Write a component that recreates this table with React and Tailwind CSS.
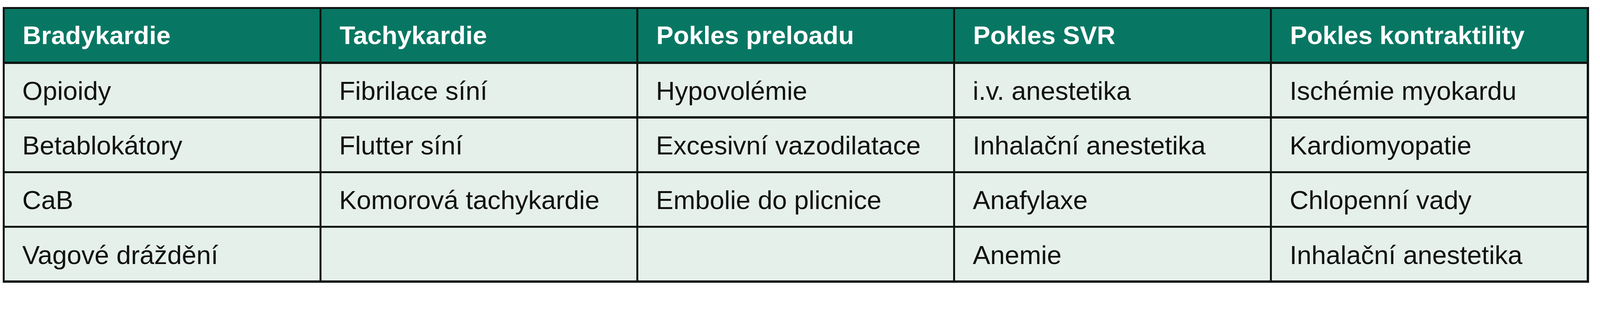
import React from 'react';

const headers = [
  'Bradykardie',
  'Tachykardie',
  'Pokles preloadu',
  'Pokles SVR',
  'Pokles kontraktility',
];

const rows = [
  ['Opioidy', 'Fibrilace síní', 'Hypovolémie', 'i.v. anestetika', 'Ischémie myokardu'],
  ['Betablokátory', 'Flutter síní', 'Excesivní vazodilatace', 'Inhalační anestetika', 'Kardiomyopatie'],
  ['CaB', 'Komorová tachykardie', 'Embolie do plicnice', 'Anafylaxe', 'Chlopenní vady'],
  ['Vagové dráždění', '', '', 'Anemie', 'Inhalační anestetika'],
];

const App = () => {
  return (
    <div className="bg-white pl-[6.5px] pt-[17.7px] font-['Liberation_Sans',Arial,sans-serif]">
      <div className="w-[4061px] bg-[#0f1612] p-[5.6px] grid grid-cols-5 auto-rows-[134.7px] gap-[5.6px]">
        {/* header */}
        {headers.map((h) => (
          <div
            key={h}
            className="bg-[#077763] flex items-center pl-[46px] text-white font-bold text-[65.5px] leading-none whitespace-nowrap"
          >
            {h}
          </div>
        ))}

        {/* body */}
        {rows.map((row, i) =>
          row.map((cell, j) => (
            <div
              key={i + '-' + j}
              className="bg-[#e6f0eb] flex items-center pl-[45px] pt-[3px] text-[#111111] text-[67px] leading-none whitespace-nowrap"
            >
              {cell}
            </div>
          ))
        )}
      </div>
    </div>
  );
};

export default App;
